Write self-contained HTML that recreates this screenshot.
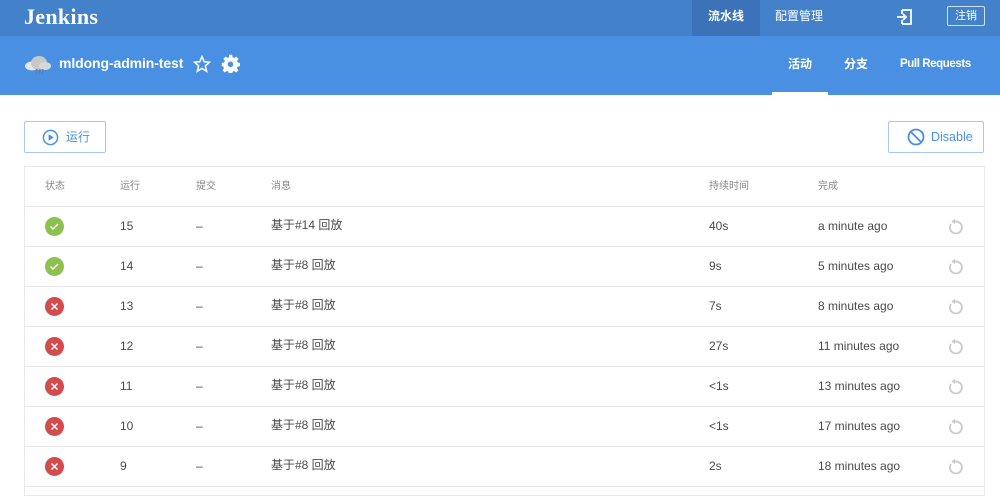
<!DOCTYPE html>
<html><head><meta charset="utf-8"><style>
*{margin:0;padding:0;box-sizing:border-box}
body{width:1000px;height:490px;overflow:hidden;background:#fff;font-family:"Liberation Sans","Noto Sans CJK SC",sans-serif;color:#4a4a4a}
.top{position:absolute;left:0;top:0;width:1000px;height:36px;background:#4382cb}
.logo{position:absolute;left:24px;top:4px;font-family:"Liberation Serif",serif;font-weight:bold;font-size:22px;letter-spacing:0.3px;color:#fff}
.nav1{position:absolute;left:692px;top:0;width:68px;height:36px;background:#3b72b8;color:#fff;font-size:12px;font-weight:bold;text-align:center;line-height:32px}
.nav2{position:absolute;left:775px;top:0;height:36px;color:#fff;font-size:12px;line-height:32px}
.logout{position:absolute;left:947px;top:6px;width:38px;height:20px;border:1px solid #d0e0f5;border-radius:2px;color:#fff;font-size:11px;text-align:center;line-height:18px}
.sub{position:absolute;left:0;top:36px;width:1000px;height:59px;background:#4a90e2}
.title{position:absolute;left:59px;top:19px;color:#fff;font-weight:bold;font-size:14px;letter-spacing:-0.1px}
.tab{position:absolute;top:21px;color:#fff;font-size:12px;font-weight:bold;line-height:14px}
.uline{position:absolute;left:772px;top:56px;width:56px;height:3px;background:#fff}
.btn{position:absolute;top:121px;height:32px;border:1px solid #a8c8ee;border-radius:2px;color:#4a90e2;font-size:12px;line-height:30px}
.tbl{position:absolute;left:24px;top:166px;width:961px;height:330px;border:1px solid #e8e8e8}
.row{position:absolute;left:0;width:959px;height:40px;border-bottom:1px solid #e8e8e8;font-size:12px}
.row span{position:absolute;top:12px;line-height:14px;height:14px}
.h span{color:#888;font-size:10px;top:13px}
.ic{position:absolute;left:20px;top:10px;width:19px;height:19px;border-radius:50%}
.ok{background:#8cc04f}.bad{background:#d24c4c}
</style></head><body>
<div class="top"><div class="logo">Jenkins</div>
<div class="nav1">流水线</div><div class="nav2">配置管理</div>
<svg style="position:absolute;left:896px;top:9px" width="17" height="16" viewBox="0 0 17 16"><path d="M6 1h9v14H6M6 1v4M6 11v4M1 8h9M7 5l3 3-3 3" fill="none" stroke="#fff" stroke-width="1.8"/></svg>
<div class="logout">注销</div></div>
<div class="sub">
<svg style="position:absolute;left:24px;top:19px" width="28" height="22" viewBox="0 0 28 22"><ellipse cx="8" cy="11" rx="7" ry="4.5" fill="#e6e6e6"/><ellipse cx="15" cy="8" rx="8" ry="7" fill="#c8c8c8"/><ellipse cx="21" cy="11" rx="6" ry="4" fill="#d8d8d8"/><path d="M13 14l-1 5M16 14l-1 5M19 14l-1 5" stroke="#5a7fb0" stroke-width="1.2"/></svg>
<div class="title">mldong-admin-test</div>
<svg style="position:absolute;left:193px;top:19px" width="18" height="18" viewBox="0 0 24 24"><path d="M12 2l3 7 7 .6-5.5 4.8 1.7 7.3L12 17.8 5.8 21.7l1.7-7.3L2 9.6 9 9z" fill="none" stroke="#fff" stroke-width="2"/></svg>
<svg style="position:absolute;left:221px;top:18px" width="19" height="19" viewBox="0 0 24 24"><path fill="#fff" d="M10 1h4l.6 3 2 1 2.6-1.7 2.8 2.8L20.3 8.7l1 2 2.7.6v4l-3 .6-.8 2 1.8 2.6-2.8 2.8-2.6-1.8-2 .8-.6 3h-4l-.6-3-2-.8-2.6 1.8-2.8-2.8 1.8-2.6-.8-2L1 15.3v-4l3-.6.8-2L3 6.1 5.8 3.3 8.4 5l2-1z"/><circle cx="12" cy="13" r="3.5" fill="#4a90e2"/></svg>
<div class="tab" style="left:788px">活动</div><div class="tab" style="left:844px">分支</div><div class="tab" style="left:900px;font-size:11.5px;letter-spacing:-0.4px">Pull Requests</div>
<div class="uline"></div></div>
<div class="btn" style="left:24px;width:82px"><svg style="position:absolute;left:17px;top:7px" width="17" height="17" viewBox="0 0 18 18"><circle cx="9" cy="9" r="7.5" fill="none" stroke="#4a90e2" stroke-width="1.6"/><path d="M7 5.5v7l5.5-3.5z" fill="#4a90e2"/></svg><span style="position:absolute;left:41px">运行</span></div>
<div class="btn" style="left:888px;width:96px"><svg style="position:absolute;left:18px;top:6px" width="18" height="18" viewBox="0 0 18 18"><circle cx="9" cy="9" r="7.5" fill="none" stroke="#4a90e2" stroke-width="1.8"/><path d="M4 4l10 10" stroke="#4a90e2" stroke-width="1.8"/></svg><span style="position:absolute;left:42px;font-size:12.5px">Disable</span></div>
<div class="tbl">
<div class="row h" style="top:0"><span style="left:20px">状态</span><span style="left:95px">运行</span><span style="left:171px">提交</span><span style="left:246px">消息</span><span style="left:684px">持续时间</span><span style="left:793px">完成</span></div>
</div>
<script>
var d=[[1,15,"基于#14 回放","40s","a minute ago"],[1,14,"基于#8 回放","9s","5 minutes ago"],[0,13,"基于#8 回放","7s","8 minutes ago"],[0,12,"基于#8 回放","27s","11 minutes ago"],[0,11,"基于#8 回放","<1s","13 minutes ago"],[0,10,"基于#8 回放","<1s","17 minutes ago"],[0,9,"基于#8 回放","2s","18 minutes ago"]];
var t=document.querySelector('.tbl'),h='';
d.forEach(function(r,i){var ic=r[0]?'<path d="M5.5 9.5l2.5 2.5 5-5" fill="none" stroke="#fff" stroke-width="1.5"/>':'<path d="M6.5 6.5l6 6M12.5 6.5l-6 6" stroke="#fff" stroke-width="1.5"/>';
h+='<div class="row" style="top:'+(40+i*40)+'px"><div class="ic '+(r[0]?'ok':'bad')+'"><svg width="19" height="19">'+ic+'</svg></div><span style="left:95px">'+r[1]+'</span><span style="left:171px">–</span><span style="left:246px;top:11px">'+r[2]+'</span><span style="left:684px">'+r[3].replace('<','&lt;')+'</span><span style="left:793px">'+r[4]+'</span><svg style="position:absolute;left:921px;top:11px" width="18" height="18" viewBox="0 0 18 18"><path d="M5 6A6 6 0 1 0 9 3.5" fill="none" stroke="#ccc" stroke-width="1.8"/><path d="M9 0.5v6L5.5 3.5z" fill="#ccc"/></svg></div>'});
t.innerHTML+=h;
</script>
</body></html>
